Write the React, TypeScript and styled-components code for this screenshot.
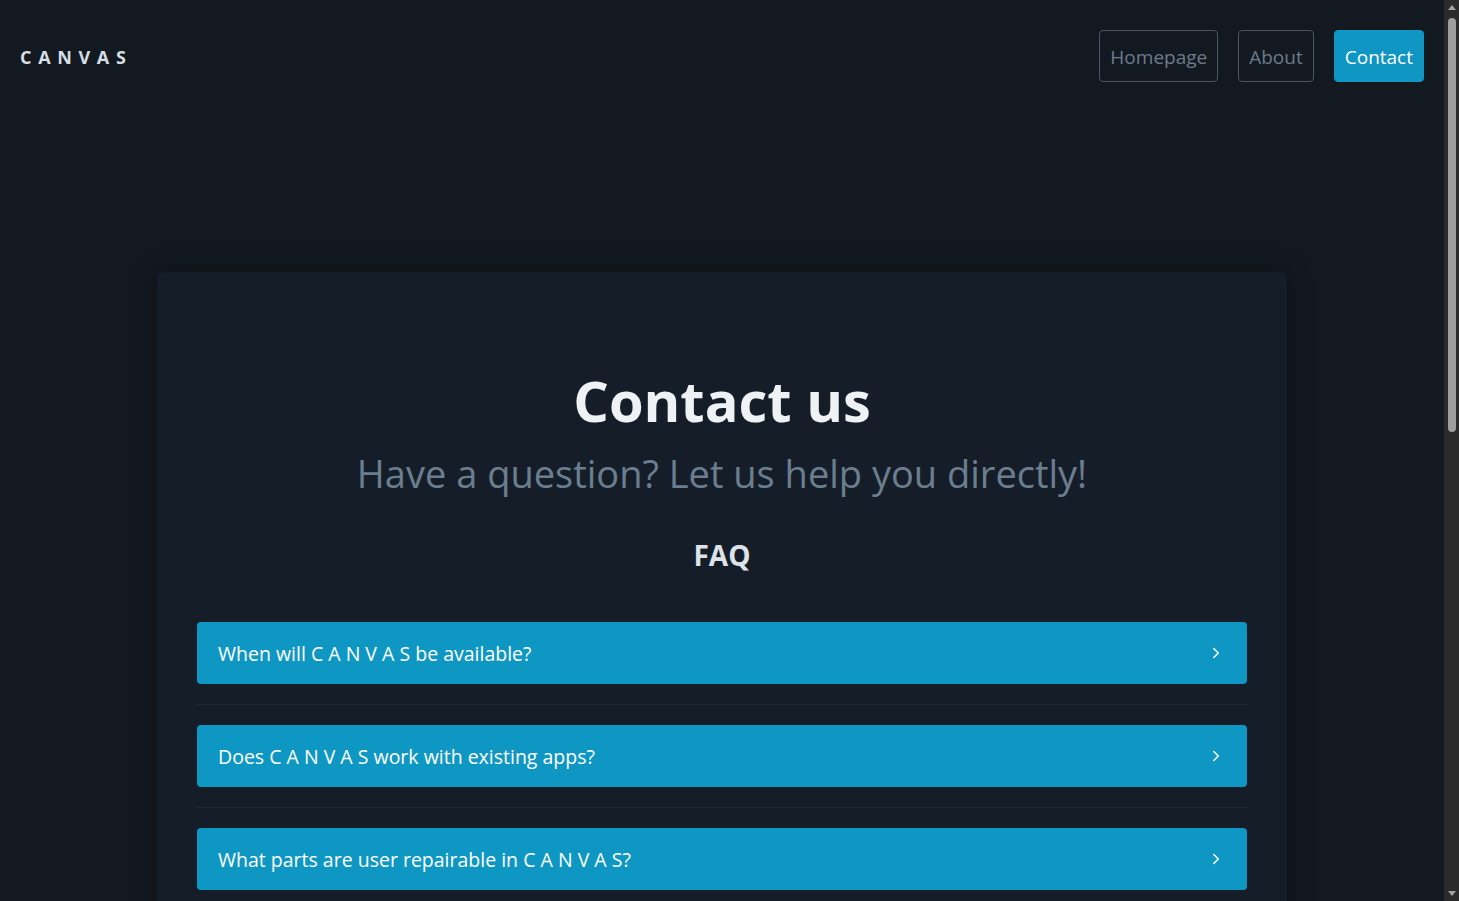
import React from "react";
import styled, { createGlobalStyle } from "styled-components";
import { ChevronRight } from "lucide-react";

const Global = createGlobalStyle`
  html, body { margin: 0; padding: 0; background: #121920; }
  body { font-family: "Open Sans", "Noto Sans", sans-serif; color: #e5e9ee; }
  * { box-sizing: border-box; }
`;

const Page = styled.div`
  min-height: 100vh;
  width: calc(100% - 15px);
  background: #121920;
  padding-bottom: 900px;
`;

const Header = styled.header`
  display: flex;
  align-items: center;
  justify-content: space-between;
  padding: 30px 20px 0 20px;
  height: 82px;
`;

const Logo = styled.div`
  font-family: "Open Sans", sans-serif;
  font-weight: 700;
  font-size: 18px;
  letter-spacing: 0.37em;
  color: #d6dde4;
  padding-top: 2px;
`;

const Nav = styled.nav`
  display: flex;
  gap: 20px;
`;

const NavButton = styled.a<{ $active?: boolean }>`
  display: flex;
  align-items: center;
  justify-content: center;
  height: 52px;
  padding: 2px 10px 0 10px;
  border-radius: 4px;
  font-size: 19px;
  text-decoration: none;
  cursor: pointer;
  border: 1px solid ${(p) => (p.$active ? "#0f96c3" : "#4a5562")};
  background: ${(p) => (p.$active ? "#0f96c3" : "transparent")};
  color: ${(p) => (p.$active ? "#ffffff" : "#6c7b8b")};
`;

const Card = styled.main`
  width: 1130px;
  margin: 190px auto 0;
  background: #151e28;
  border-radius: 6px;
  box-shadow: 0 0 24px rgba(0, 0, 0, 0.35);
  padding: 88px 40px 60px;
  display: flex;
  flex-direction: column;
  align-items: center;
`;

const Title = styled.h1`
  margin: 0;
  font-size: 56px;
  font-weight: 700;
  line-height: 80px;
  color: #eef2f5;
`;

const Subtitle = styled.p`
  margin: 3px 0 0;
  font-size: 38px;
  font-weight: 400;
  line-height: 60px;
  color: #6b7e90;
`;

const FaqTitle = styled.h2`
  margin: 32px 0 47px;
  font-size: 28px;
  font-weight: 700;
  line-height: 40px;
  color: #dde3e9;
`;

const FaqList = styled.div`
  width: 100%;
  display: flex;
  flex-direction: column;
`;

const FaqItem = styled.div`
  padding-bottom: 20px;
  margin-bottom: 20px;
  border-bottom: 1px solid #1f2a36;
`;

const FaqButton = styled.button`
  width: 100%;
  height: 62px;
  display: flex;
  align-items: center;
  justify-content: space-between;
  padding: 0 22px 0 21px;
  border: none;
  border-radius: 4px;
  background: #0f97c4;
  color: #ffffff;
  font-family: "Open Sans", sans-serif;
  font-size: 19.5px;
  text-align: left;
  cursor: pointer;
`;

/* Fake classic browser scrollbar, fixed over the right edge */
const ScrollTrack = styled.div`
  position: fixed;
  top: 0;
  right: 0;
  width: 15px;
  height: 100vh;
  background: #2b2b2b;
  display: flex;
  flex-direction: column;
  align-items: center;
`;

const ScrollArrow = styled.div<{ $down?: boolean }>`
  width: 0;
  height: 0;
  margin: ${(p) => (p.$down ? "auto 0 5px" : "5px 0 0")};
  border-left: 4px solid transparent;
  border-right: 4px solid transparent;
  ${(p) =>
    p.$down ? "border-top: 5px solid #a3a3a3;" : "border-bottom: 5px solid #a3a3a3;"}
`;

const ScrollThumb = styled.div`
  width: 8px;
  height: 414px;
  margin-top: 8px;
  background: #9e9e9e;
  border-radius: 4px;
`;

const questions = [
  "When will C A N V A S be available?",
  "Does C A N V A S work with existing apps?",
  "What parts are user repairable in C A N V A S?",
];

export default function App() {
  return (
    <>
      <Global />
      <Page>
        <Header>
          <Logo>CANVAS</Logo>
          <Nav>
            <NavButton>Homepage</NavButton>
            <NavButton>About</NavButton>
            <NavButton $active>Contact</NavButton>
          </Nav>
        </Header>
        <Card>
          <Title>Contact us</Title>
          <Subtitle>Have a question? Let us help you directly!</Subtitle>
          <FaqTitle>FAQ</FaqTitle>
          <FaqList>
            {questions.map((q) => (
              <FaqItem key={q}>
                <FaqButton>
                  <span>{q}</span>
                  <ChevronRight size={18} strokeWidth={2} />
                </FaqButton>
              </FaqItem>
            ))}
          </FaqList>
        </Card>
      </Page>
      <ScrollTrack>
        <ScrollArrow />
        <ScrollThumb />
        <ScrollArrow $down />
      </ScrollTrack>
    </>
  );
}
